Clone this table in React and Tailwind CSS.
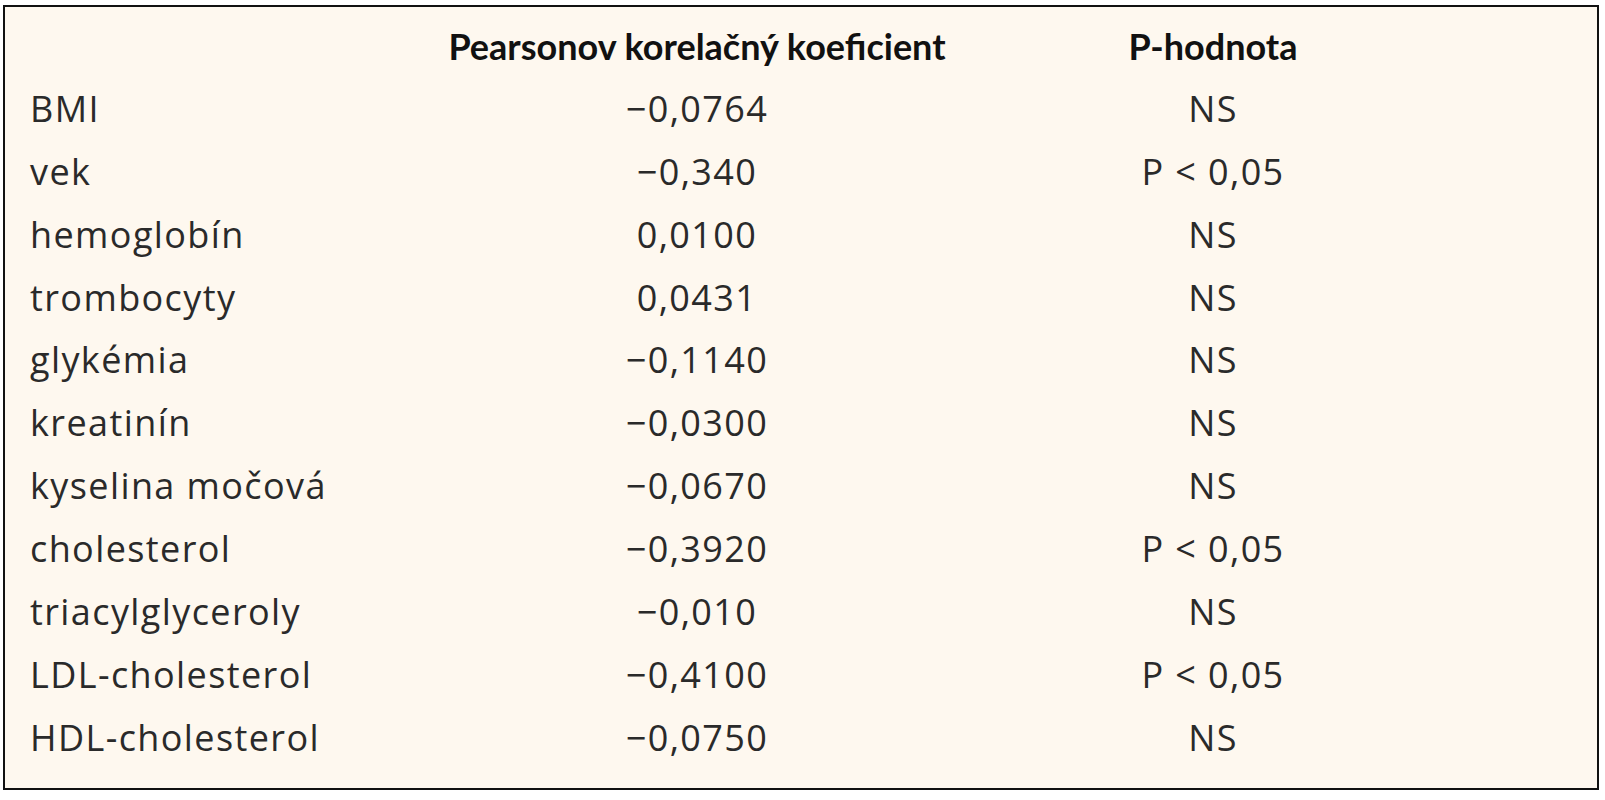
const rows = [
  ["BMI", "−0,0764", "NS"],
  ["vek", "−0,340", "P < 0,05"],
  ["hemoglobín", "0,0100", "NS"],
  ["trombocyty", "0,0431", "NS"],
  ["glykémia", "−0,1140", "NS"],
  ["kreatinín", "−0,0300", "NS"],
  ["kyselina močová", "−0,0670", "NS"],
  ["cholesterol", "−0,3920", "P < 0,05"],
  ["triacylglyceroly", "−0,010", "NS"],
  ["LDL-cholesterol", "−0,4100", "P < 0,05"],
  ["HDL-cholesterol", "−0,0750", "NS"],
];

export default function App() {
  return (
    <div className="w-[1605px] h-[800px] bg-white pt-[5px] pl-[3px]">
      <div className="w-[1596px] h-[785px] border-2 border-[#111] bg-[#fef8ef] pt-[8px]">
        <div className="grid grid-cols-[442px_500px_532px_1fr] h-[62.9px] leading-[62.9px] font-['Lato',sans-serif] font-bold text-[36px] text-[#111]">
          <div />
          <div className="text-center">Pearsonov korelačný koeficient</div>
          <div className="text-center">P-hodnota</div>
          <div />
        </div>
        {rows.map(([name, r, p]) => (
          <div
            key={name}
            className="grid grid-cols-[442px_500px_532px_1fr] h-[62.9px] leading-[62.9px] font-['Open_Sans',sans-serif] text-[36px] tracking-[1.4px] text-[#2a2a2a]"
          >
            <div className="pl-[25px]">{name}</div>
            <div className="text-center">{r}</div>
            <div className="text-center">{p}</div>
            <div />
          </div>
        ))}
      </div>
    </div>
  );
}
